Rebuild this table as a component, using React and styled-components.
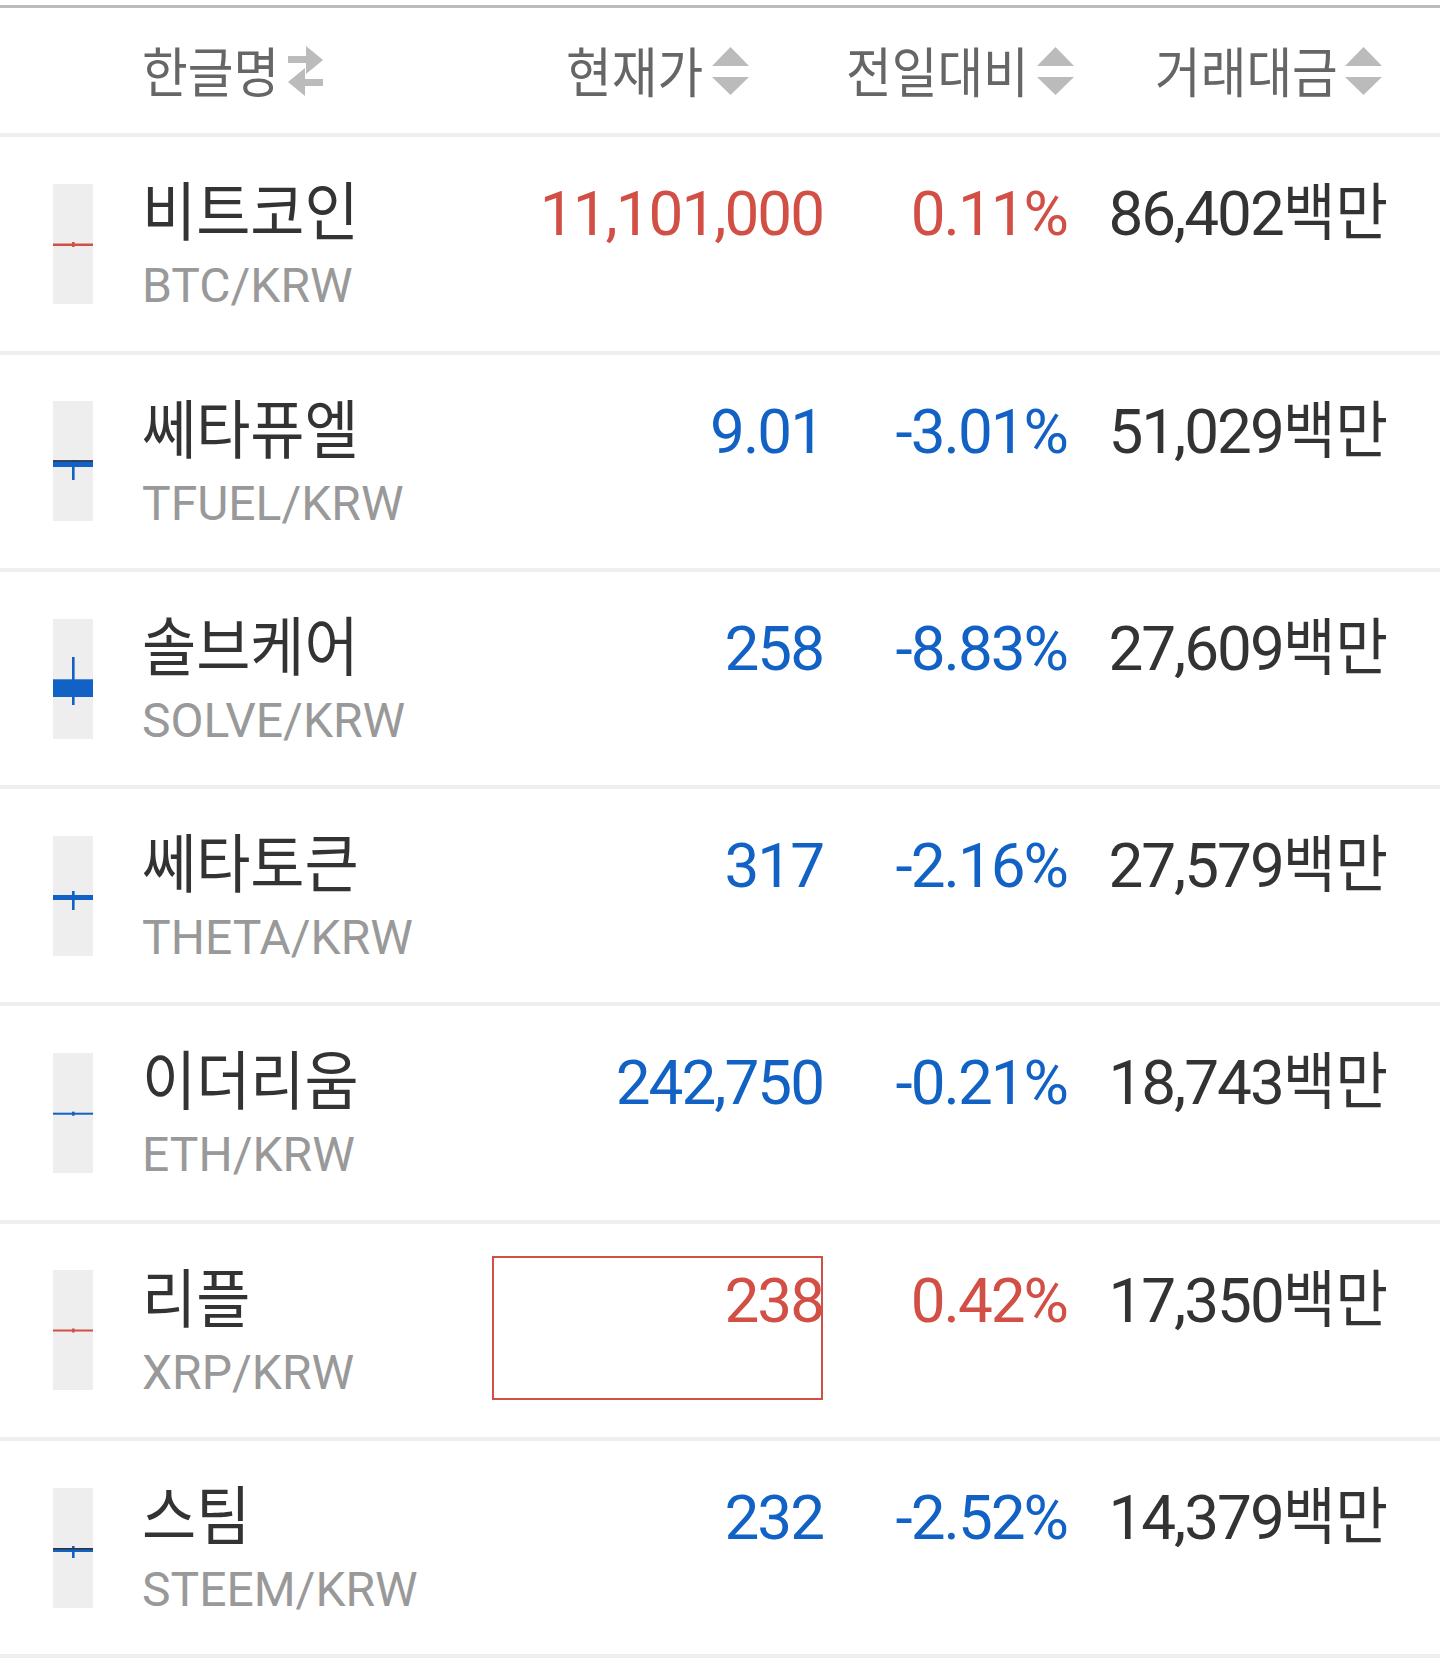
import React from 'react';
import styled, { createGlobalStyle, css } from 'styled-components';

const SQUEEZE = 0.92;
const RED = '#d24f45';
const BLUE = '#1261c4';

const GlobalStyle = createGlobalStyle`
  *, *::before, *::after { box-sizing: border-box; }
  html, body { margin: 0; padding: 0; background: #fff; }
  body {
    font-family: Roboto, "Noto Sans CJK KR", sans-serif;
    color: #333;
  }
`;

const columns = css`
  display: grid;
  grid-template-columns: 89px 350px 331px 244px 320px;
  padding: 0 53px;
`;

const Page = styled.div`
  width: 1440px;
  padding-top: 5px;
`;

const HeaderRow = styled.div`
  ${columns};
  align-items: center;
  height: 132.3px;
  border-top: 3px solid #bbb;
  border-bottom: 4px solid #eee;
`;

const HeadCell = styled.div`
  grid-column: ${p => p.$col};
  display: flex;
  align-items: center;
  justify-content: ${p => (p.$start ? 'flex-start' : 'center')};
  padding-left: ${p => p.$inset || 0}px;
`;

const HeadLabel = styled.span`
  font-size: 54px;
  line-height: 1;
  padding-top: 8px;
  color: #666;
  white-space: nowrap;
`;

const Ko = styled.span`
  display: inline-block;
  line-height: 1;
  letter-spacing: normal;
  transform: scaleX(${SQUEEZE});
  transform-origin: 0 50%;
  font-size: ${p => (p.$size ? `${p.$size}px` : 'inherit')};
  margin-right: ${p => ((SQUEEZE - 1) * p.$n).toFixed(3)}em;
`;

const IconWrap = styled.svg`
  flex: none;
  margin-left: ${p => p.$gap}px;
  display: block;
`;

const Row = styled.div`
  ${columns};
  align-items: start;
  height: 217.3px;
  border-bottom: 4px solid #eee;
`;

const CandleSvg = styled.svg`
  display: block;
  align-self: center;
`;

const TextBlock = styled.div`
  height: 144px;
  margin-top: 32px;
  padding-left: ${p => p.$inset || 0}px;
  text-align: ${p => p.$align || 'left'};
  color: ${p => p.$color || '#333'};
  ${p =>
    p.$boxed &&
    css`
      outline: 2px solid ${RED};
      outline-offset: -2px;
    `}
`;

const MainLine = styled.div`
  font-size: 62px;
  line-height: 89px;
  white-space: nowrap;
  letter-spacing: ${p => (p.$numeric ? '-2px' : 'normal')};
`;

const SubLine = styled.div`
  font-size: 48px;
  line-height: 55px;
  color: #999;
  white-space: nowrap;
`;

const SwapIcon = () => (
  <IconWrap width="35" height="50" viewBox="0 0 35 50" $gap={10}>
    <path d="M0 10h18V0l17 14-17 14V17H0z" fill="#bbb" />
    <path d="M35 33H17V22L0 36l17 14V40h18z" fill="#bbb" />
  </IconWrap>
);

const SortIcon = () => (
  <IconWrap width="37" height="48" viewBox="0 0 37 48" $gap={9}>
    <path d="M18.5 0L37 19H0z" fill="#bbb" />
    <path d="M0 30h37L18.5 48z" fill="#bbb" />
  </IconWrap>
);

const Candle = ({ color, body, wick, cap }) => (
  <CandleSvg width="40" height="120" viewBox="0 0 40 120">
    <rect width="40" height="120" fill="#eee" />
    <rect x="0" y={body[0]} width="40" height={body[1] - body[0]} fill={color} />
    {wick && <rect x="19" y={wick[0]} width="2.6" height={wick[1] - wick[0]} fill={color} />}
    {cap && <rect x="0" y={body[0]} width="40" height="1.4" fill="#333" />}
  </CandleSvg>
);

const rows = [
  { name: '비트코인', ticker: 'BTC/KRW', price: '11,101,000', change: '0.11%', amount: '86,402', up: true,
    candle: { body: [59.5, 62], wick: [58, 63] } },
  { name: '쎄타퓨엘', ticker: 'TFUEL/KRW', price: '9.01', change: '-3.01%', amount: '51,029', up: false,
    candle: { body: [59.3, 66], wick: [59, 79], cap: true } },
  { name: '솔브케어', ticker: 'SOLVE/KRW', price: '258', change: '-8.83%', amount: '27,609', up: false,
    candle: { body: [60.3, 78], wick: [38, 86] } },
  { name: '쎄타토큰', ticker: 'THETA/KRW', price: '317', change: '-2.16%', amount: '27,579', up: false,
    candle: { body: [59, 64], wick: [55, 74] } },
  { name: '이더리움', ticker: 'ETH/KRW', price: '242,750', change: '-0.21%', amount: '18,743', up: false,
    candle: { body: [59.7, 61.7], wick: [58.7, 62.7] } },
  { name: '리플', ticker: 'XRP/KRW', price: '238', change: '0.42%', amount: '17,350', up: true, boxed: true,
    candle: { body: [59.5, 61.5], wick: [58.5, 62.5] } },
  { name: '스팀', ticker: 'STEEM/KRW', price: '232', change: '-2.52%', amount: '14,379', up: false,
    candle: { body: [60, 64], wick: [58, 70], cap: true } },
];

export default function App() {
  return (
    <>
      <GlobalStyle />
      <Page>
        <HeaderRow>
          <HeadCell $col="2" $start>
            <HeadLabel><Ko $n={3}>한글명</Ko></HeadLabel>
            <SwapIcon />
          </HeadCell>
          <HeadCell $col="3">
            <HeadLabel><Ko $n={3}>현재가</Ko></HeadLabel>
            <SortIcon />
          </HeadCell>
          <HeadCell $col="4" $inset={30}>
            <HeadLabel><Ko $n={4}>전일대비</Ko></HeadLabel>
            <SortIcon />
          </HeadCell>
          <HeadCell $col="5" $inset={83}>
            <HeadLabel><Ko $n={4}>거래대금</Ko></HeadLabel>
            <SortIcon />
          </HeadCell>
        </HeaderRow>
        {rows.map(r => {
          const color = r.up ? RED : BLUE;
          return (
            <Row key={r.ticker}>
              <Candle color={color} {...r.candle} />
              <TextBlock>
                <MainLine><Ko $n={r.name.length} $size={64}>{r.name}</Ko></MainLine>
                <SubLine>{r.ticker}</SubLine>
              </TextBlock>
              <TextBlock $align="right" $color={color} $boxed={r.boxed}>
                <MainLine $numeric>{r.price}</MainLine>
              </TextBlock>
              <TextBlock $align="right" $color={color} $inset={30}>
                <MainLine $numeric>{r.change}</MainLine>
              </TextBlock>
              <TextBlock $align="right">
                <MainLine $numeric>{r.amount}<Ko $n={2}>백만</Ko></MainLine>
              </TextBlock>
            </Row>
          );
        })}
      </Page>
    </>
  );
}
